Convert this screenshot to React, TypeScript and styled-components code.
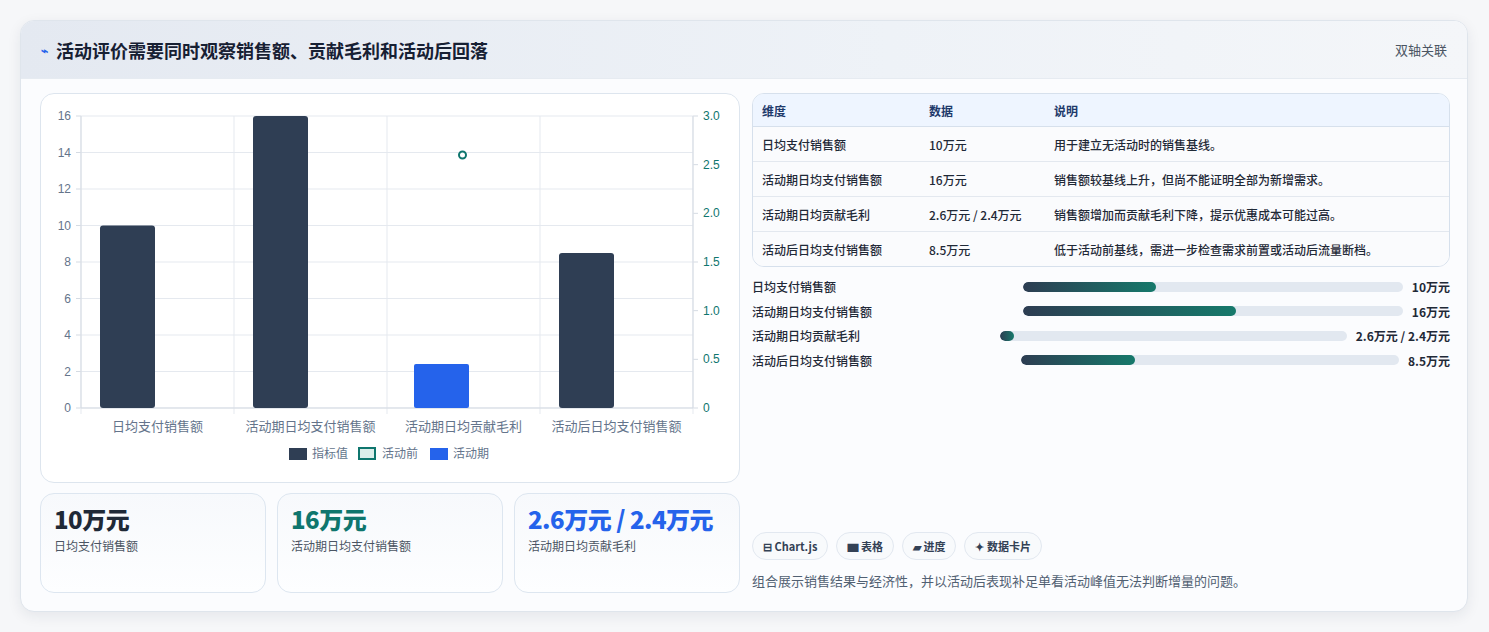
import React from "react";
import styled, { createGlobalStyle } from "styled-components";

const Global = createGlobalStyle`
  body { margin: 0; background: #f3f5f8; font-family: "Noto Sans CJK SC", "Noto Sans", sans-serif; }
`;
const Page = styled.div`padding: 20px 21px 22px 20px; background: #f6f7f9;`;
const Card = styled.div`
  border: 1px solid #dfe5ec; border-radius: 14px; background: #fbfcfe; overflow: hidden;
  box-shadow: 0 4px 14px rgba(30,41,59,0.08);
`;
const Header = styled.div`
  height: 57px; display: flex; align-items: center; justify-content: space-between; padding: 0 20px;
  background: linear-gradient(90deg, #e4e9f1, #eef2f7 60%, #f4f6f9);
  border-bottom: 1px solid #e6ebf1;
`;
const Title = styled.h1`
  margin: 0; font-size: 18px; font-weight: 700; color: #172033; display: flex; align-items: center; gap: 8px;
`;
const Icon = styled.span`color: #2563eb; font-size: 12px;`;
const Side = styled.span`font-size: 13px; color: #4b5563;`;
const Body = styled.div`display: grid; grid-template-columns: 698px 698px; gap: 14px; padding: 14px 19px 18px 19px;`;
const Left = styled.div`display: grid; grid-template-rows: 390px 100px; gap: 10px;`;
const Panel = styled.div`border: 1px solid #dde5ee; border-radius: 14px; background: #fff; position: relative;`;
const Stats = styled.div`display: grid; grid-template-columns: repeat(3, 1fr); gap: 11px;`;
const Stat = styled.div`
  border: 1px solid #dde6f0; border-radius: 14px; padding: 12px 13px;
  background: linear-gradient(180deg, #f7f9fc, #fdfeff);
`;
const StatValue = styled.div<{ $c: string }>`font-size: 24px; font-weight: 800; color: ${p => p.$c}; line-height: 1.1; letter-spacing: -0.5px;`;
const StatLabel = styled.div`font-size: 12px; color: #4b5563; margin-top: 5px;`;
const Right = styled.div`display: flex; flex-direction: column;`;
const Table = styled.table`
  width: 100%; border-collapse: separate; border-spacing: 0; border: 1px solid #d6e0ec; border-radius: 12px; overflow: hidden;
  font-size: 12px; color: #1f2937; font-weight: 500;
`;
const Th = styled.th`
  text-align: left; background: #eef5ff; color: #1e3a6b; font-weight: 700; height: 32px; padding: 0 9px;
  border-bottom: 1px solid #d6e0ec;
`;
const Td = styled.td<{ $last?: boolean }>`
  height: 34px; padding: 0 9px; background: #fafbfd; border-bottom: ${p => (p.$last ? "none" : "1px solid #e3e8ef")};
`;
const Bars = styled.div`display: flex; flex-direction: column; gap: 8px; margin-top: 11px;`;
const BarRow = styled.div`display: grid; grid-template-columns: minmax(0,1fr) minmax(0,1.45fr) auto; gap: 9px; align-items: center; height: 16.5px;`;
const BarLabel = styled.div`font-size: 12px; color: #1f2937; font-weight: 500;`;
const Track = styled.div`height: 10px; background: #e2e8f0; border-radius: 5px; overflow: hidden;`;
const Fill = styled.div`height: 100%; border-radius: 5px; background: linear-gradient(90deg, #2d3d52, #16796b);`;
const BarValue = styled.div`font-size: 12px; font-weight: 700; color: #1f2937;`;
const Spacer = styled.div`flex: 1;`;
const Tags = styled.div`display: flex; gap: 8px;`;
const Tag = styled.span`
  height: 26px; padding: 0 10px; border: 1px solid #e2e8f0; border-radius: 14px; background: #f8fafc;
  display: inline-flex; align-items: center; gap: 4px; font-size: 11px; font-weight: 700; color: #334155;
`;
const Desc = styled.p`margin: 11px 0 3px; font-size: 13px; color: #516072;`;

const rows = [
  ["日均支付销售额", "10万元", "用于建立无活动时的销售基线。", 35],
  ["活动期日均支付销售额", "16万元", "销售额较基线上升，但尚不能证明全部为新增需求。", 56],
  ["活动期日均贡献毛利", "2.6万元 / 2.4万元", "销售额增加而贡献毛利下降，提示优惠成本可能过高。", 4],
  ["活动后日均支付销售额", "8.5万元", "低于活动前基线，需进一步检查需求前置或活动后流量断档。", 30],
] as const;

function Chart() {
  const x0 = 40, x1 = 652, y0 = 22, y1 = 314;
  const yL = (v: number) => y1 - (v / 16) * (y1 - y0);
  const cw = (x1 - x0) / 4;
  const ticksL = [0, 2, 4, 6, 8, 10, 12, 14, 16];
  const ticksR = ["0", "0.5", "1.0", "1.5", "2.0", "2.5", "3.0"];
  const cats = ["日均支付销售额", "活动期日均支付销售额", "活动期日均贡献毛利", "活动后日均支付销售额"];
  const vals = [10, 16, 0, 8.5];
  const t = { fontFamily: "Liberation Sans, sans-serif", fontSize: 12 };
  return (
    <svg width="698" height="390" viewBox="0 0 698 390">
      {ticksL.map(v => (
        <g key={v}>
          <line x1={x0} x2={x1} y1={yL(v)} y2={yL(v)} stroke="#e5e9ef" />
          <line x1={x0 - 5} x2={x0} y1={yL(v)} y2={yL(v)} stroke="#d5dbe3" />
          <text x={x0 - 10} y={yL(v) + 4} textAnchor="end" fill="#64748b" {...t}>{v}</text>
        </g>
      ))}
      {ticksR.map((v, i) => {
        const y = y1 - (i / 6) * (y1 - y0);
        return (
          <g key={v}>
            <line x1={x1} x2={x1 + 5} y1={y} y2={y} stroke="#d5dbe3" />
            <text x={x1 + 10} y={y + 4} fill="#0f766e" {...t}>{v}</text>
          </g>
        );
      })}
      {[0, 1, 2, 3, 4].map(i => (
        <line key={i} x1={x0 + i * cw} x2={x0 + i * cw} y1={y0} y2={y1 + 6} stroke="#e5e9ef" />
      ))}
      <line x1={x0} x2={x0} y1={y0} y2={y1} stroke="#d5dbe3" />
      <line x1={x1} x2={x1} y1={y0} y2={y1} stroke="#d5dbe3" />
      <line x1={x0} x2={x1} y1={y1} y2={y1} stroke="#d5dbe3" />
      {vals.map((v, i) =>
        v > 0 ? (
          <rect key={i} x={x0 + i * cw + 19} y={yL(v)} width={55} height={y1 - yL(v)} rx={3} fill="#2f3e54" />
        ) : null
      )}
      <rect x={x0 + 2 * cw + 387 - 348 - 12} y={270} width={55} height={44} rx={2} fill="#2563eb" />
      <circle cx={x0 + 2.5 * cw - 1} cy={61} r={3.5} fill="#fff" stroke="#0f766e" strokeWidth={2} />
      {cats.map((c, i) => (
        <text key={c} x={x0 + (i + 0.5) * cw} y={337} textAnchor="middle" fill="#64748b" fontSize={13}
          fontFamily="Noto Sans CJK SC, sans-serif">{c}</text>
      ))}
      <g fontFamily="Noto Sans CJK SC, sans-serif" fontSize={12} fill="#64748b">
        <rect x={248} y={354} width={18} height={12} fill="#2f3e54" />
        <text x={271} y={364}>指标值</text>
        <rect x={318} y={354} width={16} height={11} fill="#dceeea" stroke="#0f766e" strokeWidth={2} />
        <text x={341} y={364}>活动前</text>
        <rect x={389} y={354} width={18} height={12} fill="#2563eb" />
        <text x={412} y={364}>活动期</text>
      </g>
    </svg>
  );
}

export default function App() {
  return (
    <Page>
      <Global />
      <Card>
        <Header>
          <Title><Icon>⌁</Icon>活动评价需要同时观察销售额、贡献毛利和活动后回落</Title>
          <Side>双轴关联</Side>
        </Header>
        <Body>
          <Left>
            <Panel><Chart /></Panel>
            <Stats>
              <Stat><StatValue $c="#1f2937">10万元</StatValue><StatLabel>日均支付销售额</StatLabel></Stat>
              <Stat><StatValue $c="#0f766e">16万元</StatValue><StatLabel>活动期日均支付销售额</StatLabel></Stat>
              <Stat><StatValue $c="#2563eb">2.6万元 / 2.4万元</StatValue><StatLabel>活动期日均贡献毛利</StatLabel></Stat>
            </Stats>
          </Left>
          <Right>
            <Table>
              <thead>
                <tr><Th style={{ width: 149 }}>维度</Th><Th style={{ width: 107 }}>数据</Th><Th>说明</Th></tr>
              </thead>
              <tbody>
                {rows.map((r, i) => (
                  <tr key={r[0]}>
                    <Td $last={i === 3}>{r[0]}</Td><Td $last={i === 3}>{r[1]}</Td><Td $last={i === 3}>{r[2]}</Td>
                  </tr>
                ))}
              </tbody>
            </Table>
            <Bars>
              {rows.map(r => (
                <BarRow key={r[0]}>
                  <BarLabel>{r[0]}</BarLabel>
                  <Track><Fill style={{ width: `${r[3]}%` }} /></Track>
                  <BarValue>{r[1]}</BarValue>
                </BarRow>
              ))}
            </Bars>
            <Spacer />
            <Tags>
              <Tag>⊟ Chart.js</Tag>
              <Tag>▆ 表格</Tag>
              <Tag>▰ 进度</Tag>
              <Tag>✦ 数据卡片</Tag>
            </Tags>
            <Desc>组合展示销售结果与经济性，并以活动后表现补足单看活动峰值无法判断增量的问题。</Desc>
          </Right>
        </Body>
      </Card>
    </Page>
  );
}
